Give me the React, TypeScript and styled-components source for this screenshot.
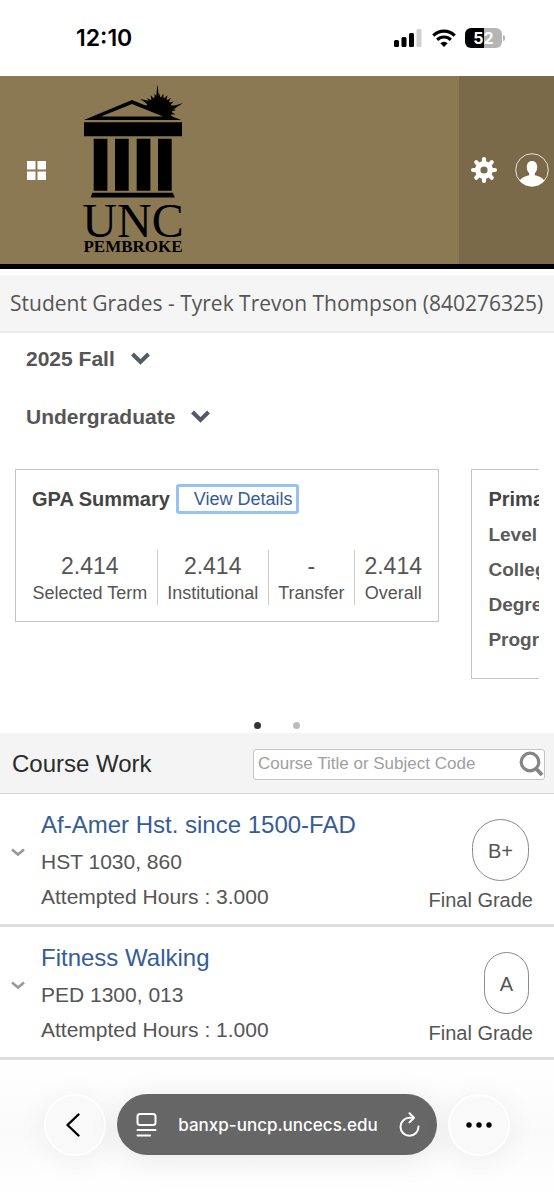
import React from "react";
import styled, { createGlobalStyle } from "styled-components";

const GlobalStyle = createGlobalStyle`
  *, *::before, *::after { box-sizing: border-box; }
  body { margin: 0; background: #fff; }
  button, input, select { font: inherit; color: inherit; margin: 0; }
  button { background: none; border: 0; padding: 0; cursor: pointer; }
  h1, h2, h3, p, ul, dl, dd, dt { margin: 0; padding: 0; font-weight: inherit; }
  a { text-decoration: none; }
  svg { display: block; flex: none; }
`;

const Page = styled.div`
  display: flex;
  flex-direction: column;
  min-height: 100vh;
  background: #fff;
  color: #555;
  font-family: "Liberation Sans", Arial, sans-serif;
`;

const StatusBar = styled.div`
  display: flex;
  justify-content: space-between;
  align-items: center;
  height: 76px;
  padding: 0 52px 0 76px;
  color: #000;
  font: 600 23px/28px Inter, sans-serif;
`;

const StatusIcons = styled.div`
  display: flex;
  align-items: center;
  gap: 9px;
`;

const Battery = styled.span`
  display: flex;
  align-items: center;
  justify-content: center;
  position: relative;
  width: 37px;
  height: 20px;
  border-radius: 6px;
  background: linear-gradient(90deg, #000 52%, #b5b5b5 52%);
  color: #fff;
  font: 700 16px/20px Inter, sans-serif;
  &::after {
    content: "";
    position: absolute;
    left: 100%;
    top: 7px;
    width: 2px;
    height: 6px;
    margin-left: 1px;
    border-radius: 0 2px 2px 0;
    background: #b5b5b5;
  }
`;

const Header = styled.header`
  display: flex;
  height: 193px;
  border-bottom: 5px solid #000;
  background: #8b7954;
  color: #fff;
`;

const MenuButton = styled.button`
  display: flex;
  align-items: center;
  padding: 0 27px;
`;

const Logo = styled.a`
  display: flex;
  flex-direction: column;
  align-items: center;
  width: 102px;
  margin: 8px auto 0 9px;
  color: #000;
  font-family: "Liberation Serif", serif;
`;

const LogoName = styled.span`
  margin-top: 4px;
  font-size: 48px;
  line-height: 38px;
`;

const LogoPlace = styled.span`
  font-size: 17px;
  font-weight: 700;
  line-height: 14px;
`;

const Account = styled.div`
  display: flex;
  align-items: center;
  justify-content: space-between;
  width: 95px;
  padding: 0 5px 0 12px;
  background: #7b6a4a;
`;

const PageTitle = styled.h1`
  margin-top: 6px;
  padding: 0 10px;
  height: 58px;
  border-bottom: 2px solid #ebebeb;
  background: #f5f5f5;
  font: 400 21px/56px "Open Sans", sans-serif;
  white-space: nowrap;
`;

const Filters = styled.div`
  display: flex;
  flex-direction: column;
  align-items: flex-start;
  gap: 30px;
  padding: 12px 26px 0;
`;

const Picker = styled.label`
  display: flex;
  align-items: center;
  gap: 16px;
  height: 28px;
`;

const PickerSelect = styled.select`
  appearance: none;
  field-sizing: content;
  border: 0;
  padding: 0;
  background: none;
  font-size: 21px;
  font-weight: 700;
  line-height: 28px;
`;

const Carousel = styled.div`
  display: flex;
  align-items: flex-start;
  gap: 32px;
  margin: 38px 15px 0;
  overflow: hidden;
`;

const Card = styled.section<{ $tall?: boolean }>`
  flex: 0 0 81%;
  padding: 14px 16px ${(p) => (p.$tall ? 21 : 16)}px;
  border: 1px solid #c4c4c4;
`;

const CardHead = styled.div`
  display: flex;
  align-items: center;
  gap: 6px;
`;

const CardTitle = styled.h2`
  color: #444;
  font-size: 20px;
  font-weight: 700;
  line-height: 30px;
`;

const DetailsLink = styled.a`
  padding: 0 3px 0 15px;
  border: 3px solid #94c3f4;
  border-radius: 3px;
  color: #365c96;
  font-size: 18px;
  line-height: 24px;
`;

const Stats = styled.dl`
  display: flex;
  justify-content: space-between;
  margin-top: 36px;
`;

const Stat = styled.div`
  display: flex;
  flex-direction: column-reverse;
  flex: auto;
  align-items: center;
  height: 55px;
  & + & { border-left: 1px solid #ccc; padding-left: 9px; }
  &:not(:last-child) { padding-right: 9px; }
`;

const StatLabel = styled.dt`
  font-size: 18px;
  line-height: 24px;
  white-space: nowrap;
`;

const StatValue = styled.dd`
  font-size: 23px;
  line-height: 30px;
`;

const FieldList = styled.ul`
  list-style: none;
  color: #5a5a5a;
  font-size: 19px;
  font-weight: 700;
  line-height: 35px;
  padding: 3px 0 0;
`;

const Dots = styled.div`
  display: flex;
  justify-content: center;
  gap: 32px;
  margin-top: 43px;
`;

const Dot = styled.button<{ $active?: boolean }>`
  width: 7px;
  height: 7px;
  border-radius: 50%;
  background: ${(p) => (p.$active ? "#333" : "#bbb")};
`;

const CourseHeader = styled.div`
  display: flex;
  align-items: center;
  justify-content: space-between;
  height: 61px;
  margin-top: 4px;
  padding: 2px 9px 0 12px;
  border-bottom: 1px solid #d8d8d8;
  background: #f4f4f4;
`;

const SectionTitle = styled.h2`
  color: #2b2b2b;
  font-size: 24px;
  line-height: 30px;
`;

const Search = styled.label`
  display: flex;
  align-items: center;
  width: 292px;
  height: 31px;
  padding: 0 0 0 4px;
  border: 1px solid #c4c4c4;
  border-radius: 3px;
  background: #fff;
`;

const SearchInput = styled.input`
  flex: 1;
  min-width: 0;
  padding: 0;
  border: 0;
  outline: 0;
  background: none;
  font-size: 17px;
  line-height: 24px;
  &::placeholder { color: #a0a0a0; opacity: 1; }
`;

const CourseList = styled.ul`
  list-style: none;
`;

const CourseRow = styled.li`
  display: flex;
  height: 133px;
  padding: 0 21px 0 11px;
  border-bottom: 3px solid #dedede;
`;

const ExpandButton = styled.button`
  align-self: flex-start;
  margin: 54px 16px 0 0;
`;

const CourseInfo = styled.div`
  flex: 1;
  padding-top: 14px;
  font-size: 21px;
  line-height: 35px;
`;

const CourseLink = styled.a`
  display: block;
  margin-bottom: 2px;
  color: #365c96;
  font-size: 24px;
  line-height: 34px;
`;

const Grade = styled.div`
  display: flex;
  flex-direction: column;
  align-items: flex-end;
  padding-top: 25px;
  font-size: 20px;
  line-height: 38px;
`;

const GradeBadge = styled.span`
  height: 62px;
  margin-right: 4px;
  padding: 0 15px;
  border: 1px solid #8a8a8a;
  border-radius: 30px;
  line-height: 62px;
`;

const BrowserBar = styled.nav`
  display: flex;
  justify-content: center;
  gap: 11px;
  margin-top: auto;
  padding: 34px 44px 44px;
  background: linear-gradient(#fff, #fafafa 50%, #fff);
`;

const RoundButton = styled.button`
  display: flex;
  align-items: center;
  justify-content: center;
  flex: none;
  width: 62px;
  height: 62px;
  border: 2px solid #fff;
  border-radius: 50%;
  background: #f9f9f9;
  color: #000;
  box-shadow: 0 4px 32px rgba(0, 0, 0, 0.06);
`;

const AddressBar = styled.div`
  display: flex;
  flex: 1;
  align-items: center;
  justify-content: space-between;
  height: 61px;
  padding: 0 17px 0 19px;
  border-radius: 31px;
  background: #666;
  color: #fff;
  font: 500 17px/24px Inter, sans-serif;
  box-shadow: 0 4px 32px rgba(0, 0, 0, 0.08);
`;

const SUN_RAYS = Array.from({ length: 24 }, (_, i) => i * 15);
const TEETH = [0, 45, 90, 135];

function BuildingMark() {
  return (
    <svg width="102" height="114" viewBox="0 0 102 114" aria-hidden="true">
      <circle cx="77" cy="26" r="13" />
      {SUN_RAYS.map((a) => (
        <path key={a} d="M75.500 14 L77 9 L78.500 14 Z" transform={`rotate(${a} 77 26)`} />
      ))}
      <path d="M74 14 L75.500 0 L77 14 Z M88 23 L101 19 L89 27 Z M66 20 L58 15 L68 17 Z" />
      <path d="M0 36h102v8H0z" fill="#8b7954" />
      <path d="M2 36 L50 16 L99 36 Z" />
      <path d="M19 32.500 L50 20 L81 32.500 Z" fill="#8b7954" />
      <path d="M2 38.300h98v14h-98z M11.700 54.700h13.700v52h-13.700z M33 54.700h13.700v52h-13.700z M54.700 54.700h13.700v52h-13.700z M76 54.700h13.700v52h-13.700z" />
      <path d="M10.300 108.700h80.500l2 4.800h-84.200z" />
    </svg>
  );
}

function GearIcon() {
  return (
    <svg width="26" height="26" viewBox="0 0 26 26" fill="none" stroke="#fff" aria-hidden="true">
      <circle cx="13" cy="13" r="6.300" strokeWidth="5.400" />
      {TEETH.map((a) => (
        <path
          key={a}
          d="M13 2.100v3M13 20.900v3"
          strokeWidth="4.200"
          strokeLinecap="round"
          transform={`rotate(${a} 13 13)`}
        />
      ))}
    </svg>
  );
}

function AvatarIcon() {
  return (
    <svg width="34" height="34" viewBox="0 0 34 34" aria-hidden="true">
      <circle cx="17" cy="17" r="16.300" fill="none" stroke="#e8e2d6" strokeWidth="1" />
      <path
        d="M17 8c3.300 0 5.200 2.600 5.200 6 0 3-1 4.700-2.400 6.300v2c3.600.7 7.300 2 9.700 5.200A16.300 16.300 0 0 1 17 33.300 16.300 16.300 0 0 1 4.500 27.500c2.400-3.200 6.100-4.500 9.700-5.200v-2C12.800 18.700 11.800 17 11.800 14c0-3.400 1.900-6 5.200-6z"
        fill="#fff"
      />
    </svg>
  );
}

function Chevron({ small }: { small?: boolean }) {
  return small ? (
    <svg width="14" height="9" viewBox="0 0 14 9" fill="none" stroke="#999" strokeWidth="2.600" aria-hidden="true">
      <path d="M1 1.500 L7 6.500 L13 1.500" />
    </svg>
  ) : (
    <svg width="19" height="14" viewBox="0 0 19 14" fill="none" stroke="#535b64" strokeWidth="4" aria-hidden="true">
      <path d="M1.500 2 L9.500 10 L17.500 2" />
    </svg>
  );
}

const FILTERS = [
  { name: "Term", value: "2025 Fall" },
  { name: "Level", value: "Undergraduate" },
];

const STATS = [
  { label: "Selected Term", value: "2.414" },
  { label: "Institutional", value: "2.414" },
  { label: "Transfer", value: "-" },
  { label: "Overall", value: "2.414" },
];

const COURSES = [
  { title: "Af-Amer Hst. since 1500-FAD", code: "HST 1030, 860", hours: "3.000", grade: "B+" },
  { title: "Fitness Walking", code: "PED 1300, 013", hours: "1.000", grade: "A" },
];

export default function App() {
  return (
    <Page>
      <GlobalStyle />
      <StatusBar>
        <span>12:10</span>
        <StatusIcons>
          <svg width="29" height="18" viewBox="0 0 29 18" aria-hidden="true">
            <rect x="0" y="11" width="5" height="7" rx="1.500" />
            <rect x="7.500" y="8" width="5" height="10" rx="1.500" />
            <rect x="15" y="4" width="5" height="14" rx="1.500" />
            <rect x="22.500" y="0" width="5" height="18" rx="1.500" fill="#d0d0d0" />
          </svg>
          <svg width="24" height="18" viewBox="0 0 24 18" fill="none" stroke="#000" strokeWidth="3.200" aria-hidden="true">
            <path d="M1.300 6.600a15.200 15.200 0 0 1 21.400 0" />
            <path d="M5.200 10.800a9.600 9.600 0 0 1 13.600 0" />
            <path d="M8.300 14.300a5.200 5.200 0 0 1 7.400 0L12 18z" fill="#000" stroke="none" />
          </svg>
          <Battery>52</Battery>
        </StatusIcons>
      </StatusBar>

      <Header>
        <MenuButton aria-label="Menu">
          <svg width="19" height="19" viewBox="0 0 19 19" fill="#fff" aria-hidden="true">
            <path d="M0 0h8.500v8.500H0zM10.500 0H19v8.500h-8.500zM0 10.500h8.500V19H0zM10.500 10.500H19V19h-8.500z" />
          </svg>
        </MenuButton>
        <Logo href="#home">
          <BuildingMark />
          <LogoName>UNC</LogoName>
          <LogoPlace>PEMBROKE</LogoPlace>
        </Logo>
        <Account>
          <button aria-label="Settings">
            <GearIcon />
          </button>
          <button aria-label="Profile">
            <AvatarIcon />
          </button>
        </Account>
      </Header>

      <PageTitle>Student Grades - Tyrek Trevon Thompson (840276325)</PageTitle>

      <Filters>
        {FILTERS.map((f) => (
          <Picker key={f.name}>
            <PickerSelect aria-label={f.name}>
              <option>{f.value}</option>
            </PickerSelect>
            <Chevron />
          </Picker>
        ))}
      </Filters>

      <Carousel>
        <Card>
          <CardHead>
            <CardTitle>GPA Summary</CardTitle>
            <DetailsLink href="#details">View Details</DetailsLink>
          </CardHead>
          <Stats>
            {STATS.map((s) => (
              <Stat key={s.label}>
                <StatLabel>{s.label}</StatLabel>
                <StatValue>{s.value}</StatValue>
              </Stat>
            ))}
          </Stats>
        </Card>
        <Card $tall>
          <CardTitle>Primary</CardTitle>
          <FieldList>
            <li>Level</li>
            <li>College</li>
            <li>Degree</li>
            <li>Program</li>
          </FieldList>
        </Card>
      </Carousel>
      <Dots>
        <Dot $active aria-label="Slide 1" />
        <Dot aria-label="Slide 2" />
      </Dots>

      <CourseHeader>
        <SectionTitle>Course Work</SectionTitle>
        <Search>
          <SearchInput type="text" aria-label="Search courses" placeholder="Course Title or Subject Code" />
          <svg width="25" height="26" viewBox="0 0 25 26" fill="none" stroke="#858585" aria-hidden="true">
            <circle cx="11" cy="11" r="8.800" strokeWidth="3.200" />
            <path d="M17 17.500 L23 24" strokeWidth="4" />
          </svg>
        </Search>
      </CourseHeader>

      <CourseList>
        {COURSES.map((c) => (
          <CourseRow key={c.code}>
            <ExpandButton aria-label={`Expand ${c.title}`}>
              <Chevron small />
            </ExpandButton>
            <CourseInfo>
              <CourseLink href="#course">{c.title}</CourseLink>
              <p>{c.code}</p>
              <p>Attempted Hours : {c.hours}</p>
            </CourseInfo>
            <Grade>
              <GradeBadge>{c.grade}</GradeBadge>
              <span>Final Grade</span>
            </Grade>
          </CourseRow>
        ))}
      </CourseList>

      <BrowserBar>
        <RoundButton aria-label="Back">
          <svg width="18" height="24" viewBox="0 0 18 24" fill="none" stroke="currentColor" strokeWidth="2.400" strokeLinecap="round" strokeLinejoin="round" aria-hidden="true">
            <path d="M12.500 1.500 L1.500 12 L12.500 22.500" />
          </svg>
        </RoundButton>
        <AddressBar>
          <button aria-label="Page menu">
            <svg width="21" height="24" viewBox="0 0 21 24" fill="none" stroke="currentColor" strokeWidth="2" strokeLinecap="round" aria-hidden="true">
              <rect x="1.500" y="1" width="18" height="11" rx="2.500" />
              <path d="M1.500 17h18M1.500 22.500h12.500" />
            </svg>
          </button>
          <span>banxp-uncp.uncecs.edu</span>
          <button aria-label="Reload">
            <svg width="21" height="25" viewBox="0 0 21 25" fill="none" stroke="currentColor" strokeWidth="2" strokeLinecap="round" strokeLinejoin="round" aria-hidden="true">
              <path d="M14.500 5.800 H10.500 A9 9 0 1 0 19.500 14.600" />
              <path d="M10.500 1.200 L15 5.800 L10.500 10.400" />
            </svg>
          </button>
        </AddressBar>
        <RoundButton aria-label="More">
          <svg width="26" height="6" viewBox="0 0 26 6" fill="currentColor" aria-hidden="true">
            <circle cx="3" cy="3" r="2.700" />
            <circle cx="13" cy="3" r="2.700" />
            <circle cx="23" cy="3" r="2.700" />
          </svg>
        </RoundButton>
      </BrowserBar>
    </Page>
  );
}
